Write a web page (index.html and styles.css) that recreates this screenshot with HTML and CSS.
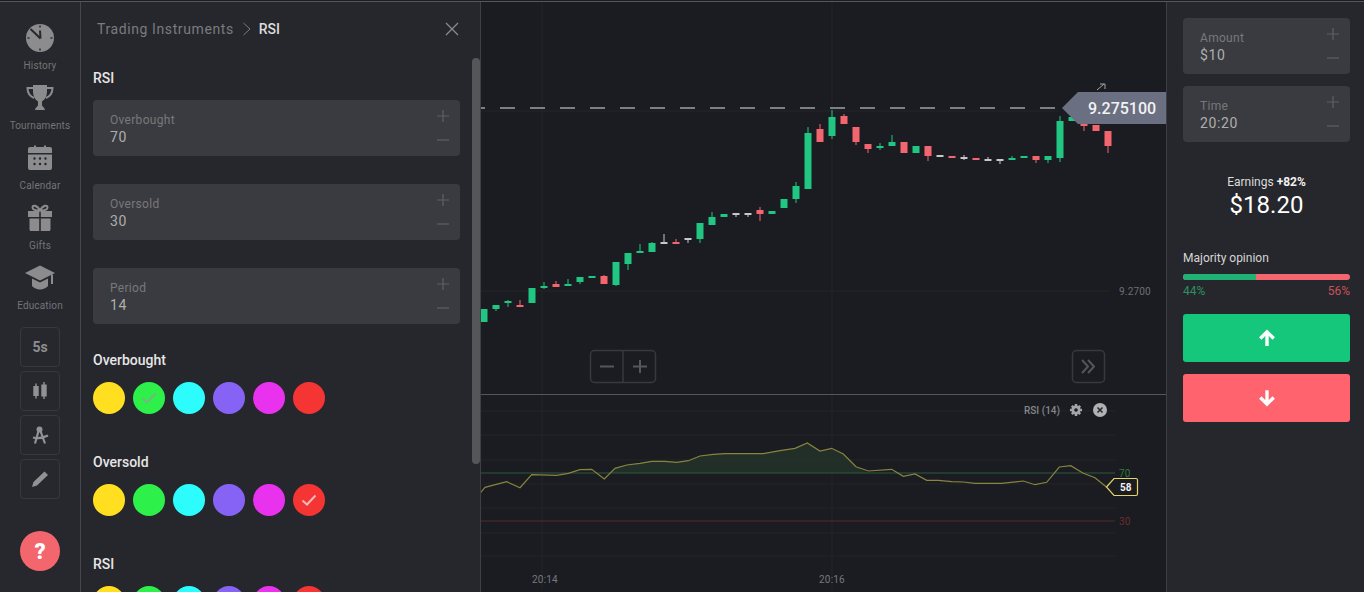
FILE: index.html
```html
<!DOCTYPE html>
<html lang="en">
<head>
    <meta charset="UTF-8">
    <meta name="viewport" content="width=device-width, initial-scale=1.0">
    <title>Trading Instruments - RSI</title>
    <link rel="stylesheet" href="styles.css">
</head>
<body>
    <div class="app">
        <nav class="rail">
            <div class="rail-nav">
                <a class="rail-item">
                    <svg class="rail-icon" viewBox="0 0 30 30"><circle cx="15" cy="15" r="14"/><path class="cut" d="M5.500 6 15.500 15.500M15 7.500 15.500 15.500" /><path class="cut thin" d="M15 2.500v2M15 25.500v2M2.500 15h2M25.500 15h2"/></svg>
                    <span>History</span>
                </a>
                <a class="rail-item">
                    <svg class="rail-icon" viewBox="0 0 30 30"><path d="M8 2h14v6c0 6-2.500 9-5 10.500V22c0 1.500 2.500 2 3 5H10c.5-3 3-3.500 3-5v-3.500C10.500 17 8 14 8 8z"/><path class="ring" d="M8 5H2.500c0 5 2 8 6.500 10M22 5h5.500c0 5-2 8-6.500 10"/></svg>
                    <span>Tournaments</span>
                </a>
                <a class="rail-item">
                    <svg class="rail-icon" viewBox="0 0 30 30"><path d="M5 4h4V2.500h2V4h8V2.500h2V4h4a2 2 0 0 1 2 2v4H3V6a2 2 0 0 1 2-2zM3 11.500h24V25a2 2 0 0 1-2 2H5a2 2 0 0 1-2-2z"/><path class="cut dots" d="M9.500 15.500h.01M15 15.500h.01M20.500 15.500h.01M9.500 21h.01M15 21h.01M20.500 21h.01"/></svg>
                    <span>Calendar</span>
                </a>
                <a class="rail-item">
                    <svg class="rail-icon" viewBox="0 0 30 30"><path d="M3 8h11.200v6H3zM15.800 8H27v6H15.800zM4.500 15.500h9.700V28H6a1.500 1.500 0 0 1-1.500-1.500zM15.800 15.500h9.700v11a1.500 1.500 0 0 1-1.500 1.500h-8.200z"/><path class="ring" d="M15 7.500C12 2 7.500 1.500 7.500 4.500S12 7.500 15 7.500c3 0 7.500 0 7.500-3S18 2 15 7.500z"/></svg>
                    <span>Gifts</span>
                </a>
                <a class="rail-item">
                    <svg class="rail-icon" viewBox="0 0 30 30"><path d="M15 2.500 30 10 15 17.500 0 10z"/><path d="M7 15.500 15 19.500l8-4V23c-2 2-5 3.500-8 3.500S9 25 7 23z"/><path class="ring" d="M27 11.500V21"/></svg>
                    <span>Education</span>
                </a>
            </div>
            <div class="rail-tools">
                <button class="tool">5s</button>
                <button class="tool">
                    <svg viewBox="0 0 20 20"><path d="M5.300 2.500h1.400v2.500h2v10h-2v2.500H5.300V15h-2V5h2zM13.300 1h1.400v2.500h2v12h-2V18h-1.400v-2.500h-2v-12h2z"/></svg>
                </button>
                <button class="tool">
                    <svg viewBox="0 0 20 20"><circle cx="9.500" cy="4.500" r="3"/><path class="ring" d="M8.500 6 5 18.500M10.500 6 15 18.500M3 12.500c4 1 10 .5 15-2"/></svg>
                </button>
                <button class="tool">
                    <svg viewBox="0 0 20 20"><path d="M14.500 2.500 18 6 7 16.500 2 18l1.500-5z"/></svg>
                </button>
            </div>
            <button class="help">?</button>
        </nav>

        <aside class="panel">
            <header class="panel-head">
                <span class="crumb">Trading Instruments</span>
                <svg class="crumb-sep" viewBox="0 0 10 14"><path d="M1.500 1 8 7l-6.500 6"/></svg>
                <span class="crumb-now">RSI</span>
                <svg class="panel-close" viewBox="0 0 14 14"><path d="M1 1 13 13M13 1 1 13"/></svg>
            </header>

            <h3 class="section-title">RSI</h3>
            <div class="field field-gap">
                <div class="field-text"><label>Overbought</label><strong>70</strong></div>
                <div class="stepper"><svg viewBox="0 0 12 12"><path d="M6 0v12M0 6h12"/></svg><svg viewBox="0 0 12 12"><path d="M0 6h12"/></svg></div>
            </div>
            <div class="field field-gap">
                <div class="field-text"><label>Oversold</label><strong>30</strong></div>
                <div class="stepper"><svg viewBox="0 0 12 12"><path d="M6 0v12M0 6h12"/></svg><svg viewBox="0 0 12 12"><path d="M0 6h12"/></svg></div>
            </div>
            <div class="field field-gap">
                <div class="field-text"><label>Period</label><strong>14</strong></div>
                <div class="stepper"><svg viewBox="0 0 12 12"><path d="M6 0v12M0 6h12"/></svg><svg viewBox="0 0 12 12"><path d="M0 6h12"/></svg></div>
            </div>

            <h3 class="section-title">Overbought</h3>
            <div class="swatches">
                <span class="swatch yellow"></span>
                <span class="swatch green"><svg class="tick muted" viewBox="0 0 16 12"><path d="M1.500 6.500 6 10.500 14.500 1.500"/></svg></span>
                <span class="swatch cyan"></span>
                <span class="swatch purple"></span>
                <span class="swatch magenta"></span>
                <span class="swatch red"></span>
            </div>

            <h3 class="section-title">Oversold</h3>
            <div class="swatches">
                <span class="swatch yellow"></span>
                <span class="swatch green"></span>
                <span class="swatch cyan"></span>
                <span class="swatch purple"></span>
                <span class="swatch magenta"></span>
                <span class="swatch red"><svg class="tick" viewBox="0 0 16 12"><path d="M1.500 6.500 6 10.500 14.500 1.500"/></svg></span>
            </div>

            <h3 class="section-title">RSI</h3>
            <div class="swatches">
                <span class="swatch yellow"></span>
                <span class="swatch green"></span>
                <span class="swatch cyan"></span>
                <span class="swatch purple"></span>
                <span class="swatch magenta"></span>
                <span class="swatch red"></span>
            </div>

            <div class="scrollbar"></div>
        </aside>

        <main class="chart">
            <!-- viewBox uses page coordinates so the numbers read the same as the screen -->
            <svg class="chart-svg" viewBox="481 2 685 590">
                <g class="grid">
                    <path d="M481 291H1110M542 2V590M832 2V590M481 111H1060"/>
                    <path d="M481 411H1115M481 435H1115M481 460H1115M481 484H1115M481 508H1115M481 533H1115M481 556H1115"/>
                </g>
                <path class="price-line" d="M470 108H1062"/>
                <g id="candles"></g>
                <path class="price-tag" d="M1062 108 1078 92H1166V124H1078z"/>
                <text class="price-text" x="1088" y="114">9.275100</text>
                <path class="expand" d="M1097 90 1104 84M1100 84H1105V89"/>
                <text class="axis-text" x="1119" y="295">9.2700</text>

                <g class="zoom-btns">
                    <rect x="590.500" y="350.500" width="65" height="32" rx="4"/>
                    <path d="M623 350V383"/>
                    <path class="zoom-mark" d="M600 366.500H614M633 366.500H647M640 360V373"/>
                    <rect x="1072.500" y="350.500" width="32" height="32" rx="4"/>
                    <path class="zoom-mark" d="M1082 360 1088 366.500 1082 373M1088 360 1094 366.500 1088 373"/>
                </g>

                <path class="divider" d="M481 394.500H1166"/>
                <path class="rsi-fill" d="M610 473 615 468.300 626.700 465 640 463.300 651.700 461.300 665 461.300 676.700 462.300 688.300 460.700 700 456 713.300 454.300 725 453.700 763.300 453.700 780 450.700 795 448.300 807.300 443 820 451 831.700 448.300 843.300 454 856 466.700 868 473z"/>
                <path class="rsi-70" d="M481 473H1115"/>
                <path class="rsi-30" d="M481 521H1115"/>
                <polyline class="rsi-line" points="480,493.300 485,487.300 506.700,481.700 520,487.700 531.700,474.700 556.700,475.300 568.300,473.300 580,469.700 591.700,469.300 604.300,479 615,468.300 626.700,465 640,463.300 651.700,461.300 665,461.300 676.700,462.300 688.300,460.700 700,456 713.300,454.300 725,453.700 763.300,453.700 780,450.700 795,448.300 807.300,443 820,451 831.700,448.300 843.300,454 856,466.700 868.300,471 891.700,469.300 903.300,476.300 915,474 926.700,480.300 938.300,480.300 951.700,481.700 963.300,482 975,483.300 1001.700,483.300 1023.300,481 1035,484.700 1046.700,482.300 1059.300,467 1070.700,465.700 1083.300,473.300 1095,477.700 1106.700,487.300"/>
                <text class="axis-text level-up" x="1119" y="477">70</text>
                <text class="axis-text level-down" x="1119" y="525">30</text>
                <path class="rsi-tag" d="M1106.500 487 1114 478.500H1136a1.500 1.500 0 0 1 1.500 1.500V494a1.500 1.500 0 0 1-1.500 1.500H1114z"/>
                <text class="rsi-tag-text" x="1120" y="491">58</text>

                <text class="rsi-name" x="1024" y="414">RSI (14)</text>
                <g class="rsi-gear">
                    <path class="gear-teeth" d="M1076 404V416M1070 410H1082M1071.800 405.800 1080.200 414.200M1080.200 405.800 1071.800 414.200"/>
                    <circle cx="1076" cy="410" r="4.500" class="gear-ring"/>
                    <circle cx="1076" cy="410" r="1.800" class="gear-hole"/>
                </g>
                <circle class="rsi-close" cx="1100" cy="410" r="7"/>
                <path class="rsi-close-x" d="M1097.500 407.500 1102.500 412.500M1102.500 407.500 1097.500 412.500"/>

                <text class="axis-text time" x="532" y="583">20:14</text>
                <text class="axis-text time" x="819" y="583">20:16</text>
            </svg>
        </main>

        <aside class="deal">
            <div class="field">
                <div class="field-text"><label>Amount</label><strong>$10</strong></div>
                <div class="stepper"><svg viewBox="0 0 12 12"><path d="M6 0v12M0 6h12"/></svg><svg viewBox="0 0 12 12"><path d="M0 6h12"/></svg></div>
            </div>
            <div class="field">
                <div class="field-text"><label>Time</label><strong>20:20</strong></div>
                <div class="stepper"><svg viewBox="0 0 12 12"><path d="M6 0v12M0 6h12"/></svg><svg viewBox="0 0 12 12"><path d="M0 6h12"/></svg></div>
            </div>

            <div class="earnings">Earnings <b>+82%</b></div>
            <div class="payout">$18.20</div>

            <div class="opinion">Majority opinion</div>
            <div class="opinion-bar"><span class="opinion-up"></span></div>
            <div class="opinion-nums"><span class="pct-up">44%</span><span class="pct-down">56%</span></div>

            <button class="trade up">
                <svg viewBox="0 0 16 16"><path d="M8 15V3M2 8.500 8 2.500l6 6"/></svg>
            </button>
            <button class="trade down">
                <svg viewBox="0 0 16 16"><path d="M8 1V13M2 7.500 8 13.500l6-6"/></svg>
            </button>
        </aside>
    </div>

    <script src="chart.js"></script>
</body>
</html>
```

FILE: styles.css
```css
* {
    box-sizing: border-box;
}
body {
    margin: 0;
    padding-top: 1px;
    background: #1b1c21;
    overflow: hidden;
    font-family: Roboto, "Liberation Sans", sans-serif;
}
.app {
    display: flex;
    height: 591px;
    border-top: 1px solid #55565b;
    overflow: hidden;
}

/* left rail */
.rail {
    width: 81px;
    flex: none;
    background: #27282d;
    border-right: 1px solid #46474c;
    display: flex;
    flex-direction: column;
    align-items: center;
}
.rail-nav {
    width: 100%;
    height: 310px;
    padding-top: 21px;
    display: flex;
    flex-direction: column;
    align-items: center;
    gap: 11px;
    overflow: hidden;
}
.rail-item {
    display: flex;
    flex-direction: column;
    align-items: center;
    color: #737478;
    font-size: 10px;
    line-height: 12px;
    letter-spacing: 0.15px;
}
.rail-icon {
    width: 30px;
    height: 30px;
    margin-bottom: 7px;
    fill: #8c8c8e;
}
.rail-icon .cut {
    fill: none;
    stroke: #27282d;
    stroke-width: 2;
}
.rail-icon .cut.thin {
    stroke-width: 1.500;
}
.rail-icon .cut.dots {
    stroke-width: 2.400;
    stroke-linecap: round;
}
.ring {
    fill: none;
    stroke: #8c8c8e;
    stroke-width: 2;
}
.rail-tools {
    margin-top: 15px;
    display: flex;
    flex-direction: column;
    gap: 4px;
}
.tool {
    width: 40px;
    height: 40px;
    padding: 0;
    background: none;
    border: 1px solid #37383d;
    border-radius: 4px;
    color: #8e8e90;
    font: 700 14px Roboto, sans-serif;
    display: flex;
    align-items: center;
    justify-content: center;
}
.tool svg {
    width: 20px;
    height: 20px;
    fill: #929294;
}
.tool .ring {
    stroke: #929294;
    stroke-width: 2.200;
}
.help {
    width: 40px;
    height: 40px;
    margin-top: 32px;
    padding: 0;
    border: 0;
    border-radius: 50%;
    background: #f4666d;
    color: #fff;
    font: 900 22px Roboto, sans-serif;
}

/* settings panel */
.panel {
    position: relative;
    width: 400px;
    flex: none;
    padding: 0 20px 0 12px;
    background: #26272c;
    border-right: 1px solid #3f4045;
    overflow: hidden;
}
.panel-head {
    height: 54px;
    margin-bottom: 14px;
    padding-left: 4px;
    display: flex;
    align-items: center;
    font-size: 14px;
}
.crumb {
    color: #7a7b7f;
    letter-spacing: 0.6px;
}
.crumb-sep {
    width: 10px;
    height: 14px;
    margin: 0 7px 0 8px;
    fill: none;
    stroke: #7a7b7f;
    stroke-width: 1;
}
.crumb-now {
    color: #dcdcdc;
    font-weight: 500;
}
.panel-close {
    width: 14px;
    height: 14px;
    margin-left: auto;
    margin-right: 1px;
    fill: none;
    stroke: #8c8d90;
    stroke-width: 1.200;
}
.section-title {
    margin: 0 0 14px;
    color: #e6e6e6;
    font-size: 14px;
    font-weight: 500;
    line-height: 16px;
}
.field {
    display: flex;
    justify-content: space-between;
    height: 56px;
    padding: 13px 11px 0 17px;
    background: #3a3b40;
    border-radius: 4px;
}
.field-gap {
    margin-bottom: 28px;
}
.field-text label {
    display: block;
    color: #77787c;
    font-size: 12px;
    line-height: 14px;
    letter-spacing: 0.3px;
}
.field-text strong {
    display: block;
    margin-top: 1px;
    color: #aeaeae;
    font-size: 14px;
    font-weight: 400;
    line-height: 18px;
    letter-spacing: 0.6px;
}
.stepper {
    display: flex;
    flex-direction: column;
    gap: 12px;
    margin-top: -3px;
}
.stepper svg {
    display: block;
    width: 12px;
    height: 12px;
    fill: none;
    stroke: #5f6064;
    stroke-width: 1.200;
}
.swatches {
    display: flex;
    gap: 8px;
    margin-bottom: 40px;
}
.swatch {
    width: 32px;
    height: 32px;
    border-radius: 50%;
    display: flex;
    align-items: center;
    justify-content: center;
}
.yellow { background: #ffdf1f; }
.green { background: #2df04a; }
.cyan { background: #2cfcfc; }
.purple { background: #8663f4; }
.magenta { background: #e832ee; }
.red { background: #f53434; }
.tick {
    width: 16px;
    height: 12px;
    fill: none;
    stroke: #f8b8b8;
    stroke-width: 2;
}
.tick.muted {
    stroke: #74b87c;
}
.scrollbar {
    position: absolute;
    top: 56px;
    right: 0;
    width: 8px;
    height: 406px;
    border-radius: 4px;
    background: #55565a;
}

/* chart */
.chart {
    flex: 1;
    min-width: 0;
    background: #1b1c21;
    border-right: 1px solid #3f4045;
}
.chart-svg {
    display: block;
    width: 685px;
    height: 590px;
}
.grid path {
    fill: none;
    stroke: #232429;
    stroke-width: 1;
}
.price-line {
    fill: none;
    stroke: #7e7f86;
    stroke-width: 2;
    stroke-dasharray: 15 15;
}
.wick {
    stroke-width: 1;
}
.candle-g { fill: #20c681; stroke: #20c681; }
.candle-r { fill: #f4666f; stroke: #f4666f; }
.candle-w { fill: #c8c8ca; stroke: #c8c8ca; }
.candle-body {
    stroke: none;
}
.price-tag {
    fill: #6a7081;
}
.price-text {
    fill: #f2f2f2;
    font-size: 16px;
    font-weight: 500;
}
.expand {
    fill: none;
    stroke: #a5a5a8;
    stroke-width: 1;
}
.axis-text {
    fill: #6d6e72;
    font-size: 10px;
    letter-spacing: 0.2px;
}
.axis-text.time {
    fill: #77787c;
}
.level-up { fill: #2a7a3e; }
.level-down { fill: #6e2b2e; }
.zoom-btns rect,
.zoom-btns path {
    fill: none;
    stroke: #38393e;
    stroke-width: 1.500;
}
.zoom-btns .zoom-mark {
    stroke: #55565b;
    stroke-width: 2;
}
.divider {
    stroke: #55565b;
    stroke-width: 1;
}
.rsi-fill {
    fill: #23352a;
    opacity: 0.8;
}
.rsi-70 {
    stroke: #2c5a3c;
    stroke-width: 1;
}
.rsi-30 {
    stroke: #55282c;
    stroke-width: 1;
}
.rsi-line {
    fill: none;
    stroke: #87843f;
    stroke-width: 1.200;
}
.rsi-tag {
    fill: #1b1c21;
    stroke: #e6d46a;
    stroke-width: 1.200;
}
.rsi-tag-text {
    fill: #f2f2f2;
    font-size: 10px;
    font-weight: 700;
}
.rsi-name {
    fill: #85868a;
    font-size: 10px;
    font-weight: 500;
}
.gear-ring {
    fill: #a5a5a8;
}
.gear-hole {
    fill: #1b1c21;
}
.gear-teeth {
    fill: none;
    stroke: #a5a5a8;
    stroke-width: 2.500;
}
.rsi-close {
    fill: #b2b2b4;
}
.rsi-close-x {
    fill: none;
    stroke: #26272c;
    stroke-width: 1.500;
}

/* right column */
.deal {
    width: 197px;
    flex: none;
    padding: 16px 14px 0 16px;
    background: #26272c;
}
.deal .field + .field {
    margin-top: 12px;
}
.earnings {
    margin-top: 32px;
    text-align: center;
    color: #dcdcdc;
    font-size: 12px;
    line-height: 16px;
}
.earnings b {
    color: #f2f2f2;
}
.payout {
    text-align: center;
    color: #fff;
    font-size: 24px;
    line-height: 30px;
}
.opinion {
    margin-top: 30px;
    color: #d6d6d6;
    font-size: 12px;
    line-height: 16px;
}
.opinion-bar {
    height: 6px;
    margin-top: 8px;
    border-radius: 3px;
    background: #f4666f;
    overflow: hidden;
}
.opinion-up {
    display: block;
    width: 44%;
    height: 100%;
    background: #20b274;
}
.opinion-nums {
    display: flex;
    justify-content: space-between;
    margin-top: 4px;
    font-size: 12px;
    line-height: 14px;
}
.pct-up { color: #2c9160; }
.pct-down { color: #c5525b; }
.trade {
    display: flex;
    align-items: center;
    justify-content: center;
    width: 100%;
    height: 48px;
    padding: 0;
    border: 0;
    border-radius: 3px;
}
.trade svg {
    width: 18px;
    height: 18px;
    fill: none;
    stroke: #fff;
    stroke-width: 3;
}
.trade.up {
    margin-top: 16px;
    background: #14c77a;
}
.trade.down {
    margin-top: 12px;
    background: #ff636d;
}
```

FILE: chart.js
```js
// type, wick top, body top, body bottom, wick bottom (page y)
const candles = [
    ['g', 309, 309, 322, 322], ['g', 305, 305, 309, 311], ['g', 300, 301, 303, 307], ['r', 300, 305, 307, 307],
    ['g', 288, 288, 303, 303], ['g', 282, 286, 288, 289], ['r', 281, 284, 287, 287], ['g', 279, 284, 285, 286],
    ['g', 277, 277, 282, 284], ['g', 276, 276, 277, 277], ['r', 275, 276, 284, 284], ['g', 262, 262, 285, 286],
    ['g', 253, 253, 264, 270], ['g', 244, 251, 253, 253], ['g', 242, 243, 252, 252], ['w', 234, 242, 243, 243],
    ['r', 239, 242, 243, 243], ['w', 238, 238, 240, 243], ['g', 223, 223, 239, 243], ['g', 212, 217, 225, 225],
    ['g', 214, 214, 217, 217], ['w', 213, 213, 215, 217], ['w', 213, 213, 215, 217], ['r', 207, 210, 214, 221],
    ['g', 211, 211, 214, 214], ['g', 199, 199, 208, 208], ['g', 182, 186, 199, 203], ['g', 127, 133, 189, 189],
    ['r', 124, 129, 142, 142], ['g', 110, 117, 136, 139], ['r', 114, 116, 124, 124], ['r', 127, 127, 142, 145],
    ['r', 144, 144, 149, 153], ['g', 143, 146, 147, 150], ['g', 135, 142, 146, 146], ['r', 142, 142, 153, 153],
    ['g', 146, 146, 153, 153], ['r', 146, 146, 156, 161], ['w', 155, 155, 157, 157], ['r', 156, 156, 158, 158],
    ['w', 155, 157, 159, 160], ['r', 158, 158, 160, 160], ['w', 157, 159, 160, 161], ['w', 159, 159, 161, 164],
    ['g', 156, 158, 160, 160], ['g', 156, 156, 158, 158], ['r', 156, 156, 160, 163], ['g', 156, 156, 160, 163],
    ['g', 116, 121, 158, 162], ['g', 110, 117, 121, 121], ['r', 123, 123, 126, 131], ['r', 125, 125, 131, 131],
    ['r', 131, 131, 146, 153]
];

const NS = 'http://www.w3.org/2000/svg';
const group = document.getElementById('candles');

candles.forEach(function (c, i) {
    const x = 484 + i * 12;
    const g = document.createElementNS(NS, 'g');
    g.setAttribute('class', 'candle-' + c[0]);

    const wick = document.createElementNS(NS, 'line');
    wick.setAttribute('class', 'wick');
    wick.setAttribute('x1', x);
    wick.setAttribute('x2', x);
    wick.setAttribute('y1', c[1]);
    wick.setAttribute('y2', c[4]);

    const body = document.createElementNS(NS, 'rect');
    body.setAttribute('class', 'candle-body');
    body.setAttribute('x', x - 3.5);
    body.setAttribute('y', c[2]);
    body.setAttribute('width', 7);
    body.setAttribute('height', Math.max(c[3] - c[2], 2));

    g.appendChild(wick);
    g.appendChild(body);
    group.appendChild(g);
});
```
